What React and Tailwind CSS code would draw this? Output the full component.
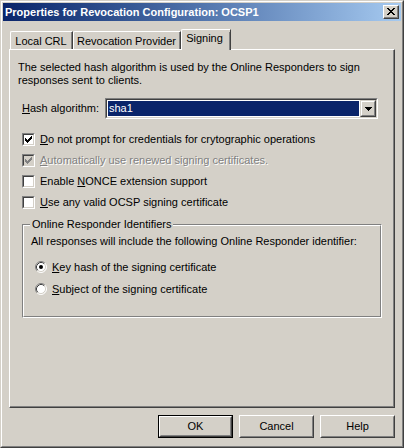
import React from "react";

const face = "bg-[#d4d0c8]";

const CheckMark = ({ color }) => (
  <svg width="9" height="9" viewBox="0 0 9 9" shapeRendering="crispEdges">
    <path
      fill={color}
      d="M7 1h1v1h-1z M6 2h2v1h-2z M1 3h1v1h-1z M5 3h3v1h-3z M1 4h2v1h-2z M4 4h3v1h-3z M1 5h5v1h-5z M2 6h3v1h-3z M3 7h1v1h-1z"
    />
  </svg>
);

const Checkbox = ({ checked, disabled, children }) => (
  <div className="flex h-[21px] items-center pl-[12px]">
    <span className="flex h-[13px] w-[13px] shrink-0 border border-t-[#808080] border-l-[#808080] border-r-white border-b-white">
      <span
        className={
          disabled
            ? "flex h-full w-full border border-t-[#404040] border-l-[#404040] border-r-[#d4d0c8] border-b-[#d4d0c8] bg-[#d4d0c8]"
            : "flex h-full w-full border border-t-[#404040] border-l-[#404040] border-r-[#d4d0c8] border-b-[#d4d0c8] bg-white"
        }
      >
        {checked && <CheckMark color={disabled ? "#808080" : "#000"} />}
      </span>
    </span>
    <span
      className={
        disabled
          ? "ml-[5px] text-[#808080] [text-shadow:1px_1px_0_#ffffff]"
          : "ml-[5px]"
      }
    >
      {children}
    </span>
  </div>
);

const Radio = ({ checked, children }) => (
  <div className="flex h-[22px] items-center pl-[11px]">
    <svg width="12" height="12" viewBox="0 0 12 12" className="shrink-0">
      <circle cx="6" cy="6" r="5" fill="#fff" />
      <path d="M2.11 9.89 A5.5 5.5 0 0 1 9.89 2.11" fill="none" stroke="#808080" />
      <path d="M9.89 2.11 A5.5 5.5 0 0 1 2.11 9.89" fill="none" stroke="#fff" />
      <path d="M2.82 9.18 A4.5 4.5 0 0 1 9.18 2.82" fill="none" stroke="#404040" />
      <path d="M9.18 2.82 A4.5 4.5 0 0 1 2.82 9.18" fill="none" stroke="#d4d0c8" />
      {checked && <circle cx="6" cy="6" r="2" fill="#000" />}
    </svg>
    <span className="ml-[5px]">{children}</span>
  </div>
);

const Button = ({ children, primary }) => (
  <div
    className={
      primary
        ? "flex h-[23px] w-[75px] border border-black"
        : "flex h-[23px] w-[75px]"
    }
  >
    <div className="flex flex-1 border border-t-white border-l-white border-r-[#404040] border-b-[#404040]">
      <div className="flex flex-1 items-center justify-center border border-t-[#d4d0c8] border-l-[#d4d0c8] border-r-[#808080] border-b-[#808080]">
        {children}
      </div>
    </div>
  </div>
);

const Tab = ({ children, active }) =>
  active ? (
    <div className="relative z-10 -mb-px flex h-[21px] w-[50px] items-start justify-center rounded-tl-[2px] border-l border-t border-r border-l-white border-t-white border-r-[#404040] bg-[#d4d0c8] pt-[2px]">
      <div className="flex h-full flex-1 justify-center border-r border-r-[#808080] pr-[2px]">
        {children}
      </div>
    </div>
  ) : null;

const SmallTab = ({ children, w }) => (
  <div
    className={`flex h-[18px] ${w} rounded-tl-[2px] border-l border-t border-r border-l-white border-t-white border-r-[#404040]`}
  >
    <div className="flex flex-1 items-center justify-center border-r border-r-[#808080] pt-px">
      {children}
    </div>
  </div>
);

export default function App() {
  return (
    <div className="h-[448px] w-[404px] text-[11px] leading-[13px] text-black [font-family:'Liberation_Sans',Arial,sans-serif]">
      <div className={`flex h-full flex-col border border-t-[#d4d0c8] border-l-[#d4d0c8] border-r-[#404040] border-b-[#404040] ${face}`}>
        <div className="flex flex-1 flex-col border border-t-white border-l-white border-r-[#808080] border-b-[#808080] p-px">
          {/* title bar */}
          <div className="flex h-[18px] items-center bg-linear-to-r from-[#0a246a] to-[#a6caf0] pl-[2px] pr-[2px]">
            <span className="flex-1 text-[11px] font-bold text-white">
              Properties for Revocation Configuration: OCSP1
            </span>
            <div className="flex h-[14px] w-[16px] border border-t-white border-l-white border-r-[#404040] border-b-[#404040] bg-[#d4d0c8]">
              <div className="flex flex-1 items-center justify-center border-r border-b border-r-[#808080] border-b-[#808080]">
                <svg width="8" height="7" viewBox="0 0 8 7" shapeRendering="crispEdges">
                  <path
                    fill="#000"
                    d="M0 0h2v1h-2z M6 0h2v1h-2z M1 1h2v1h-2z M5 1h2v1h-2z M2 2h4v1h-4z M3 3h2v1h-2z M2 4h4v1h-4z M1 5h2v1h-2z M5 5h2v1h-2z M0 6h2v1h-2z M6 6h2v1h-2z"
                  />
                </svg>
              </div>
            </div>
          </div>

          {/* tabs */}
          <div className="mx-[6px] mt-[8px] flex h-[20px] items-end pl-px">
            <SmallTab w="w-[63px]">Local CRL</SmallTab>
            <SmallTab w="w-[108px]">Revocation Provider</SmallTab>
            <Tab active>Signing</Tab>
          </div>

          {/* panel */}
          <div className="mx-[6px] flex h-[359px] border border-t-white border-l-white border-r-[#404040] border-b-[#404040]">
            <div className="flex flex-1 flex-col border-r border-b border-r-[#808080] border-b-[#808080] pt-[11px]">
              <p className="pl-[8px]">
                The selected hash algorithm is used by the Online Responders to sign
                <br />
                responses sent to clients.
              </p>

              <div className="mt-[11px] flex items-center pl-[12px]">
                <span className="w-[83px]">
                  <span className="underline">H</span>ash algorithm:
                </span>
                <div className="flex h-[21px] w-[273px] border border-t-[#808080] border-l-[#808080] border-r-white border-b-white">
                  <div className="flex flex-1 border border-t-[#404040] border-l-[#404040] border-r-[#d4d0c8] border-b-[#d4d0c8] bg-white">
                    <div className="flex flex-1 p-px">
                      <div className="flex flex-1 items-center bg-[#0a246a] pl-[1px] text-white">
                        sha1
                      </div>
                    </div>
                    <div className="flex w-[16px] border border-t-[#d4d0c8] border-l-[#d4d0c8] border-r-[#404040] border-b-[#404040]">
                      <div className="flex flex-1 items-center justify-center border border-t-white border-l-white border-r-[#808080] border-b-[#808080] bg-[#d4d0c8]">
                        <svg width="7" height="4" viewBox="0 0 7 4" shapeRendering="crispEdges">
                          <path fill="#000" d="M0 0h7v1h-7z M1 1h5v1h-5z M2 2h3v1h-3z M3 3h1v1h-1z" />
                        </svg>
                      </div>
                    </div>
                  </div>
                </div>
              </div>

              <div className="mt-[10px] flex flex-col">
                <Checkbox checked>
                  <span className="underline">D</span>o not prompt for credentials for crytographic operations
                </Checkbox>
                <Checkbox checked disabled>
                  <span className="underline">A</span>utomatically use renewed signing certificates.
                </Checkbox>
                <Checkbox>
                  Enable <span className="underline">N</span>ONCE extension support
                </Checkbox>
                <Checkbox>
                  <span className="underline">U</span>se any valid OCSP signing certificate
                </Checkbox>
              </div>

              {/* group box */}
              <div className="ml-[12px] mt-[11px] flex h-[94px] w-[360px] border border-t-[#808080] border-l-[#808080] border-r-white border-b-white">
                <div className="flex flex-1 flex-col border border-t-white border-l-white border-r-[#808080] border-b-[#808080]">
                  <span className="-mt-[8px] ml-[6px] w-fit bg-[#d4d0c8] px-[2px]">
                    Online Responder Identifiers
                  </span>
                  <p className="mt-[4px] pl-[7px]">
                    All responses will include the following Online Responder identifier:
                  </p>
                  <div className="mt-[8px] flex flex-col">
                    <Radio checked>
                      <span className="underline">K</span>ey hash of the signing certificate
                    </Radio>
                    <Radio>
                      <span className="underline">S</span>ubject of the signing certificate
                    </Radio>
                  </div>
                </div>
              </div>
            </div>
          </div>

          {/* buttons */}
          <div className="mr-[6px] mt-[7px] flex justify-end gap-[6px]">
            <Button primary>OK</Button>
            <Button>Cancel</Button>
            <Button>Help</Button>
          </div>
        </div>
      </div>
    </div>
  );
}
